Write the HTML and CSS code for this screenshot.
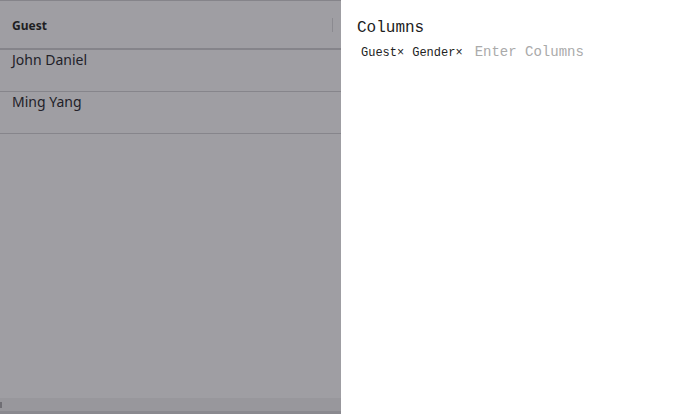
FILE: index.html
```html
<!DOCTYPE html>
<html>
<head>
<meta charset="utf-8">
<link rel="stylesheet" href="styles.css">
</head>
<body>
<div class="page">
  <div class="grid">
    <div class="header">
      <span class="head-label">Guest</span>
      <span class="head-sep"></span>
    </div>
    <div class="row"><span class="cell">John Daniel</span></div>
    <div class="row"><span class="cell">Ming Yang</span></div>
    <div class="body-fill"></div>
    <div class="hscroll"><span class="thumb"></span></div>
  </div>
  <div class="drawer">
    <div class="title">Columns</div>
    <div class="tags">
      <span class="tag">Guest×</span>
      <span class="tag">Gender×</span>
      <span class="placeholder">Enter Columns</span>
    </div>
  </div>
</div>
</body>
</html>
```
FILE: styles.css
```css
html, body {
  margin: 0;
  padding: 0;
  background: #ffffff;
}
.page {
  display: flex;
  width: 682px;
  height: 414px;
}
.grid {
  width: 341px;
  height: 414px;
  display: flex;
  flex-direction: column;
  background: #9f9ea3;
  border-top: 1px solid #85848a;
  box-sizing: border-box;
  font-family: "Noto Sans", "DejaVu Sans", sans-serif;
  color: #222;
}
.header {
  height: 46px;
  flex: none;
  display: flex;
  align-items: center;
  justify-content: space-between;
  padding: 1px 8px 0 12px;
  border-bottom: 2px solid #85848a;
}
.head-label {
  font-weight: 700;
  font-size: 12px;
  color: #1e1e22;
}
.head-sep {
  width: 1px;
  height: 14px;
  background: #8b8a90;
}
.row {
  height: 41px;
  flex: none;
  border-bottom: 1px solid #86858b;
  padding-left: 12px;
  line-height: 18px;
}
.cell {
  font-size: 14px;
  color: #222128;
}
.body-fill {
  flex: 1;
}
.hscroll {
  height: 13px;
  flex: none;
  background: #98979c;
  border-bottom: 3px solid #8a898f;
  display: flex;
  align-items: center;
}
.thumb {
  width: 2px;
  height: 6px;
  background: #6f6e74;
}
.drawer {
  flex: 1;
  padding: 18px 16px 0 16px;
  font-family: "Liberation Mono", "DejaVu Sans Mono", monospace;
}
.title {
  font-size: 16px;
  line-height: 20px;
  color: #1c1c1c;
}
.tags {
  display: flex;
  align-items: baseline;
  margin-top: 6px;
  padding-left: 4px;
}
.tag {
  font-size: 12px;
  color: #222;
  margin-right: 8px;
}
.placeholder {
  font-size: 14px;
  color: #aaaaaa;
  margin-left: 4px;
}
```
